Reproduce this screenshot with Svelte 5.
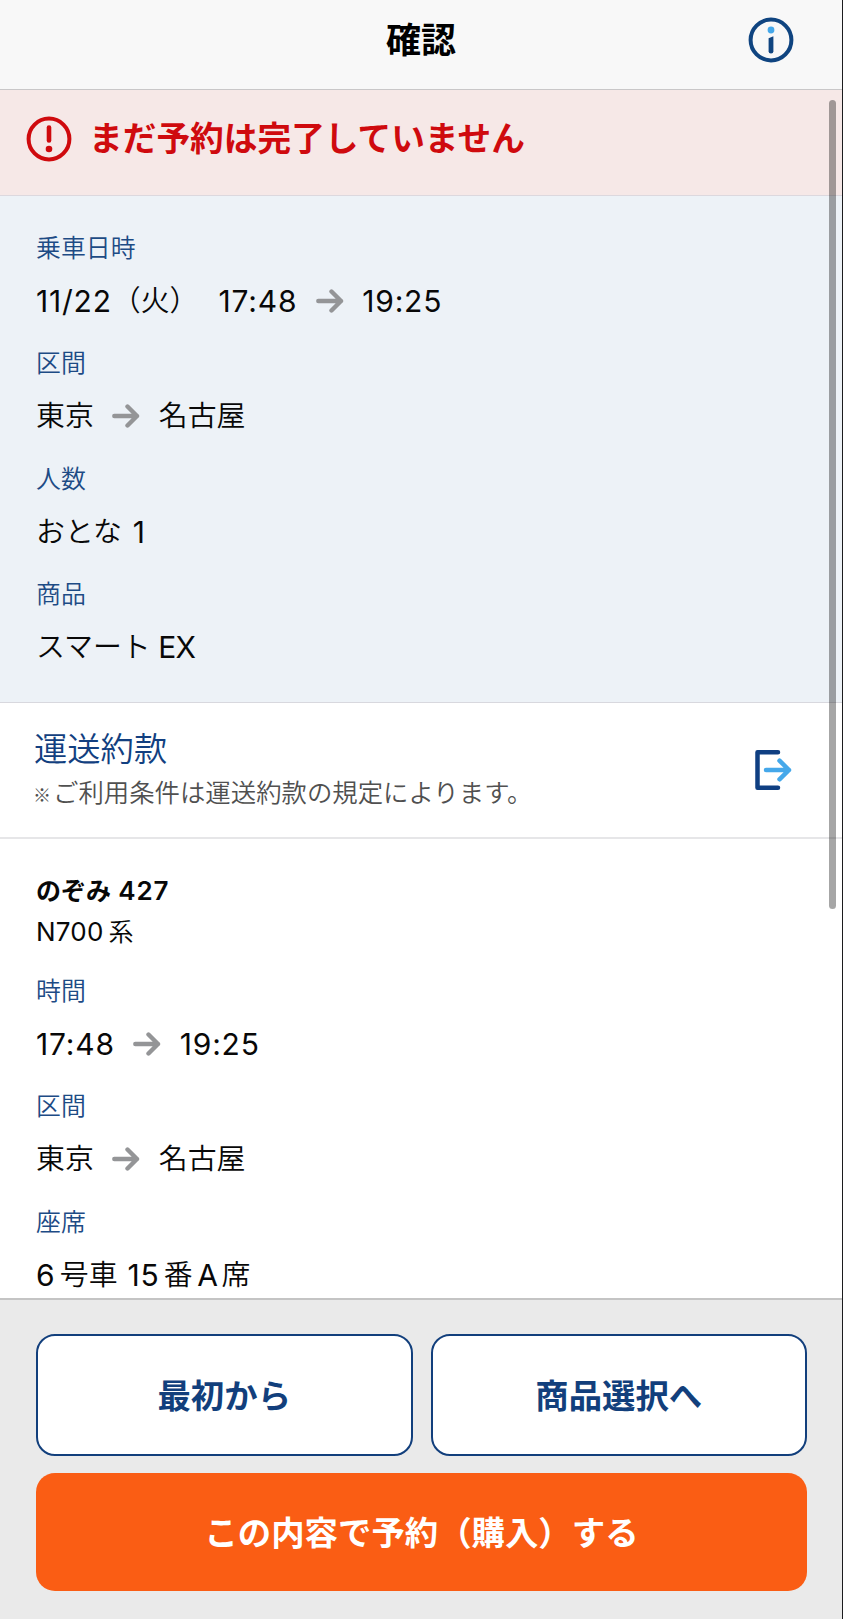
<script>
  const trip = [
    { label: '乗車日時', date: ['11/22', '（火）'], from: '17:48', to: '19:25' },
    { label: '区間', from: '東京', to: '名古屋' },
    { label: '人数', parts: ['おとな', ' 1'] },
    { label: '商品', parts: ['スマート', ' EX'] }
  ];

  const train = [
    { label: '時間', from: '17:48', to: '19:25' },
    { label: '区間', from: '東京', to: '名古屋' },
    { label: '座席', seat: ['6', '号車', ' 15', '番', 'A', '席'] }
  ];

  function runClass(text) {
    if (/\d/.test(text)) return 'latin digits';
    return /^[\sA-Z]+$/.test(text) ? 'latin' : 'kana';
  }
</script>

{#snippet run(text)}
  <span class={runClass(text)}>{text}</span>
{/snippet}

{#snippet field(item)}
  <div class="field">
    <dt>{item.label}</dt>
    <dd>
      {#if item.date}
        <span class="date">{#each item.date as part}{@render run(part)}{/each}</span>
      {/if}
      {#if item.from}
        {@render run(item.from)}
        <svg class="arrow" width="28" height="24" viewBox="0 0 28 24">
          <path d="M2.3 12H25M15.5 2.5L25 12L15.5 21.5" />
        </svg>
        {@render run(item.to)}
      {/if}
      {#each item.parts || [] as part}{@render run(part)}{/each}
      {#if item.seat}
        <span class="seat">{#each item.seat as part}{@render run(part)}{/each}</span>
      {/if}
    </dd>
  </div>
{/snippet}

<div class="screen">
  <header>
    <h1>確認</h1>
    <button class="info" aria-label="info">
      <svg width="46" height="46" viewBox="0 0 46 46">
        <circle cx="23" cy="23" r="20.4" fill="none" stroke="#0f4480" stroke-width="4" />
        <circle cx="23" cy="13" r="3.4" fill="#45a8ea" />
        <path d="M20.6 21.2L25.4 19.3V34.2a2.4 2.4 0 0 1-4.8 0z" fill="#0f4480" />
      </svg>
    </button>
  </header>

  <div class="content">
    <div class="alert">
      <svg width="46" height="46" viewBox="0 0 46 46">
        <circle cx="23" cy="23" r="20.4" fill="none" stroke="#cf0a0e" stroke-width="4" />
        <path d="M23 11.6V24.4" stroke="#cf0a0e" stroke-width="4.6" stroke-linecap="round" />
        <circle cx="23" cy="33" r="3.3" fill="#cf0a0e" />
      </svg>
      <span>まだ予約は完了していません</span>
    </div>

    <dl class="summary">
      {#each trip as item}
        {@render field(item)}
      {/each}
    </dl>

    <div class="terms">
      <div class="terms-text">
        <div class="terms-title">運送約款</div>
        <div class="terms-note"><span class="mark">※</span>ご利用条件は運送約款の規定によります。</div>
      </div>
      <svg width="38" height="42" viewBox="0 0 38 42">
        <path d="M24 3.2H3.5V38.8H24" stroke="#0f3f82" />
        <path d="M12 21H35M25.5 11.7L35 21L25.5 30.3" stroke="#45a8ea" />
      </svg>
    </div>

    <section class="train">
      <div class="train-name">のぞみ<span class="number">{' 427'}</span></div>
      <div class="train-type"><span>N700</span>系</div>
      <dl>
        {#each train as item}
          {@render field(item)}
        {/each}
      </dl>
    </section>
    <div class="scrollbar"></div>
  </div>

  <footer>
    <button class="secondary">最初から</button>
    <button class="secondary">商品選択へ</button>
    <button class="primary">この内容で予約（購入）する</button>
  </footer>
</div>

<style>
  :global(body) {
    margin: 0;
    background: #fff;
  }

  .screen {
    display: flex;
    flex-direction: column;
    box-sizing: border-box;
    height: 1619px;
    border-right: 1px solid #1c1c1e;
    overflow: hidden;
    color: #080808;
    font-family: Inter, "Noto Sans CJK JP", sans-serif;
    font-weight: 400;
  }

  header {
    display: grid;
    grid-template-columns: 1fr auto 1fr;
    align-items: center;
    box-sizing: border-box;
    height: 90px;
    padding-bottom: 9px;
    border-bottom: 1px solid #c9c7c8;
    background: #f8f8f8;
  }

  h1 {
    grid-column: 2;
    margin: 0;
    font-size: 35px;
    font-weight: 700;
    line-height: 60px;
    color: #000;
  }

  .info {
    justify-self: end;
    height: 46px;
    margin-right: 48px;
    padding: 0;
    border: 0;
    background: none;
  }

  svg {
    display: block;
    flex: none;
  }

  .content {
    position: relative;
    flex: 1;
    min-height: 0;
    overflow: hidden;
  }

  .alert {
    display: flex;
    align-items: center;
    gap: 17px;
    box-sizing: border-box;
    height: 106px;
    padding: 0 26px 8px;
    border-bottom: 1px solid #dcd8de;
    background: #f6e8e7;
    color: #cf0a0e;
    font-size: 33.7px;
    font-weight: 700;
  }

  .alert span {
    padding-bottom: 4px;
  }

  dl {
    margin: 0;
  }

  .summary {
    box-sizing: border-box;
    height: 507px;
    padding: 32px 36px 0;
    border-bottom: 1px solid #d8d8de;
    background: #edf2f7;
  }

  .field {
    height: 115.4px;
  }

  dt {
    height: 40px;
    line-height: 40px;
    font-size: 24.9px;
    font-weight: 350;
    color: #1d4b85;
  }

  dd {
    display: flex;
    align-items: center;
    height: 66px;
    margin: 0;
    line-height: 66px;
    white-space: pre;
  }

  .kana {
    font-size: 28.9px;
    font-weight: 350;
  }

  .latin {
    font-size: 30px;
    letter-spacing: -0.8px;
  }

  .digits {
    letter-spacing: 0.8px;
    word-spacing: 1.8px;
  }

  .date {
    display: flex;
    margin-right: 20px;
  }

  .arrow {
    margin: 0 18.5px;
    fill: none;
    stroke: #949597;
    stroke-width: 4.4;
    stroke-linecap: round;
    stroke-linejoin: round;
  }

  .seat {
    display: flex;
    gap: 4.4px;
  }

  .seat .digits {
    word-spacing: -3.8px;
  }

  .terms {
    display: flex;
    align-items: center;
    justify-content: space-between;
    box-sizing: border-box;
    height: 136px;
    padding: 0 50px 0 34px;
    border-bottom: 2px solid #e6e6e8;
    background: #fff;
  }

  .terms svg {
    fill: none;
    stroke-width: 4.5;
    stroke-linecap: round;
    stroke-linejoin: round;
  }

  .terms-text {
    padding-top: 1px;
  }

  .terms-title {
    font-size: 33.3px;
    font-weight: 350;
    line-height: 44px;
    color: #123f80;
  }

  .terms-note {
    height: 44px;
    font-size: 25.4px;
    font-weight: 350;
    line-height: 44px;
    color: #505050;
  }

  .mark {
    display: inline-block;
    width: 20px;
    margin-left: -1px;
    font-family: "Noto Sans CJK JP", sans-serif;
    font-size: 18px;
    font-weight: 700;
    line-height: 1;
  }

  .train {
    padding: 31px 36px 0;
  }

  .train-name {
    height: 41px;
    line-height: 41px;
    font-size: 25px;
    font-weight: 700;
    white-space: pre;
  }

  .number {
    font-size: 26px;
    font-weight: 600;
    letter-spacing: 0.8px;
  }

  .train-type {
    height: 41px;
    margin-bottom: 19px;
    line-height: 41px;
    font-size: 25px;
    font-weight: 350;
  }

  .train-type span {
    margin-right: 5px;
    font-size: 26px;
    font-weight: 400;
    letter-spacing: 0.2px;
  }

  .scrollbar {
    position: absolute;
    top: 10px;
    right: 6px;
    width: 7px;
    height: 809px;
    border-radius: 4px;
    background: rgba(0, 0, 0, 0.35);
  }

  footer {
    display: grid;
    grid-template-columns: 1fr 1fr;
    grid-template-rows: 122px 118px;
    gap: 17px 18px;
    box-sizing: border-box;
    height: 321px;
    padding: 34px 35px 0 36px;
    border-top: 2px solid #c4c4c4;
    background: #eaeaea;
  }

  footer button {
    padding: 0 0 4px;
    border-radius: 19px;
    font-family: inherit;
    font-size: 33.4px;
    font-weight: 700;
  }

  .secondary {
    border: 2px solid #123f7c;
    background: #fff;
    color: #123f7c;
  }

  .primary {
    grid-column: 1 / -1;
    border: 0;
    background: #fa5d14;
    color: #fff;
  }
</style>
